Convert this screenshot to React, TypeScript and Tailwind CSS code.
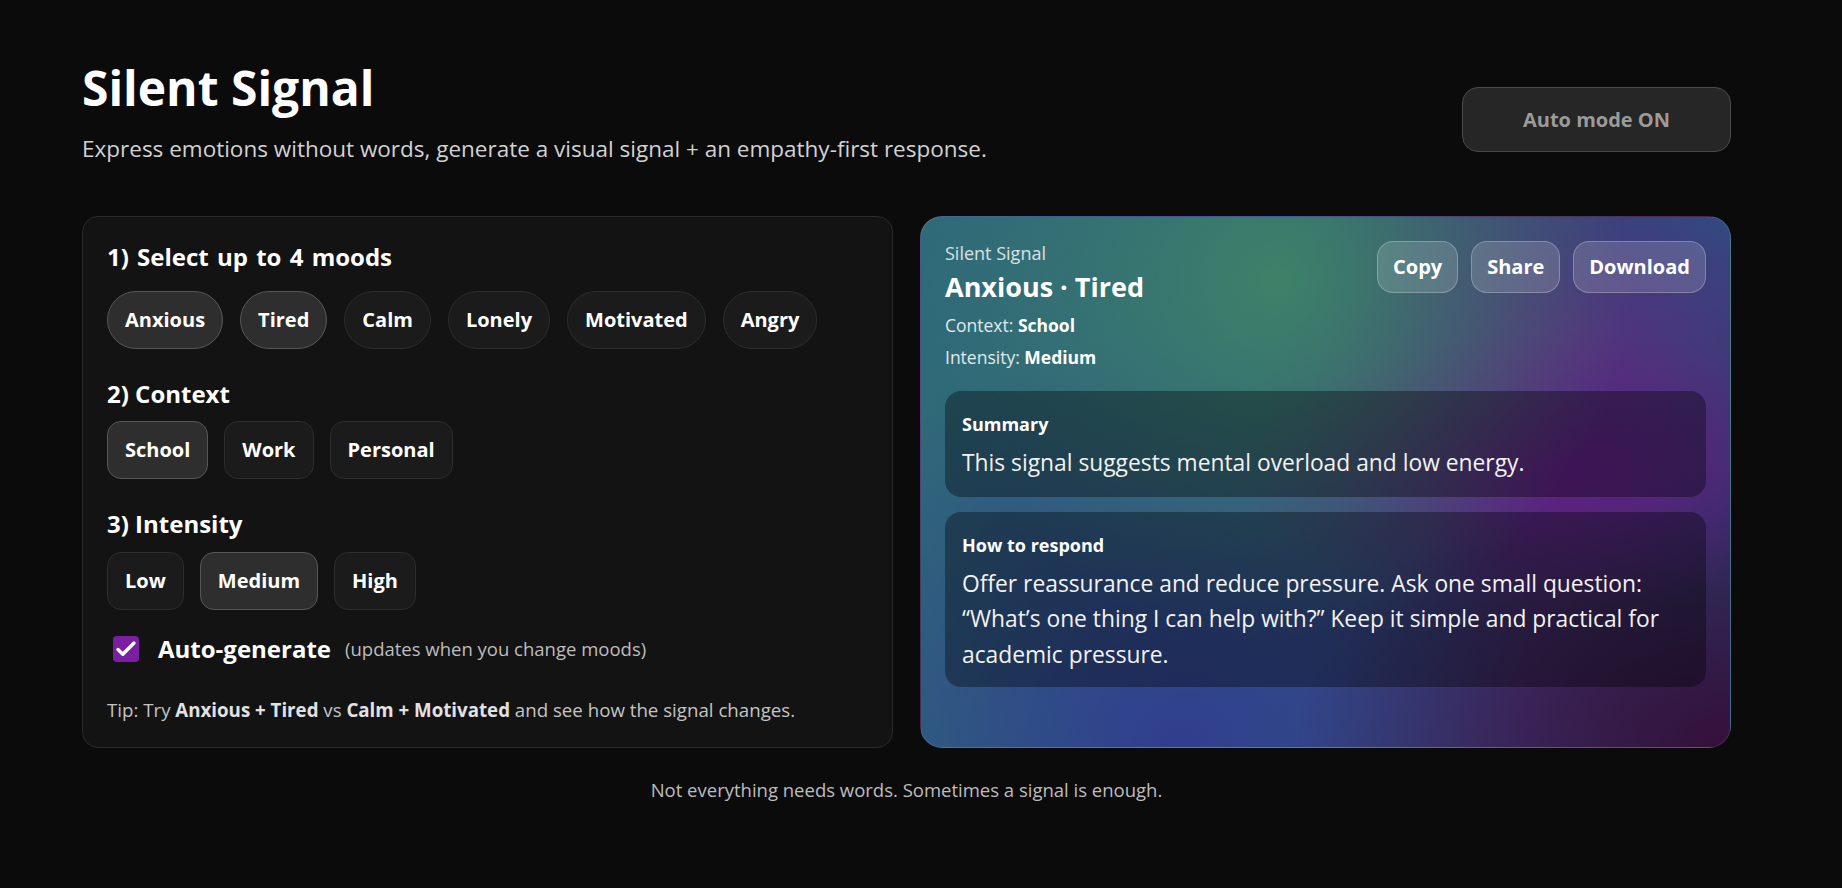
import { useState } from "react";

const MOODS = ["Anxious", "Tired", "Calm", "Lonely", "Motivated", "Angry"];
const CONTEXTS = ["School", "Work", "Personal"];
const INTENSITIES = ["Low", "Medium", "High"];

type ChipProps = { label: string; active: boolean; pill?: boolean; onClick: () => void };

function Chip({ label, active, pill, onClick }: ChipProps) {
  return (
    <button
      onClick={onClick}
      className={`h-[58px] px-[17px] border text-[20px] font-bold text-white ${pill ? "rounded-full" : "rounded-[14px]"} ${
        active ? "bg-[#2e2e2e] border-[#575757]" : "bg-[#1b1b1b] border-[#2d2d2d]"
      }`}
    >
      {label}
    </button>
  );
}

function SectionTitle({ children, className = "" }: { children: React.ReactNode; className?: string }) {
  return <h2 className={`text-[24px] leading-[32px] font-bold text-white ${className}`}>{children}</h2>;
}

export default function App() {
  const [moods, setMoods] = useState<string[]>(["Anxious", "Tired"]);
  const [context, setContext] = useState("School");
  const [intensity, setIntensity] = useState("Medium");
  const [auto, setAuto] = useState(true);

  const toggleMood = (m: string) =>
    setMoods((prev) => (prev.includes(m) ? prev.filter((x) => x !== m) : prev.length >= 4 ? prev : [...prev, m]));

  return (
    <div className="min-h-screen bg-[#0b0b0b] text-white font-['Open_Sans',sans-serif]">
      <div className="ml-[82px] w-[1649px] pt-[58px] pb-10">
        {/* header */}
        <header className="flex items-start justify-between">
          <div>
            <h1 className="text-[48px] leading-[60px] font-bold">Silent Signal</h1>
            <p className="mt-[14px] text-[22.5px] leading-[33px] text-[#d2d2d2]">
              Express emotions without words, generate a visual signal + an empathy-first response.
            </p>
          </div>
          <button className="mt-[29px] w-[269px] h-[65px] rounded-2xl border border-[#4a4a4a] bg-[#262626] text-[20px] font-bold text-[#9b9b9b]">
            Auto mode ON
          </button>
        </header>

        <div className="mt-[51px] grid grid-cols-2 gap-[27px]">
          {/* controls */}
          <section className="rounded-2xl border border-[#2a2a2a] bg-[#131313] px-6 pt-6 pb-6">
            <SectionTitle className="mb-[18px] [word-spacing:2px]">1) Select up to 4 moods</SectionTitle>
            <div className="flex gap-[17px]">
              {MOODS.map((m) => (
                <Chip key={m} label={m} pill active={moods.includes(m)} onClick={() => toggleMood(m)} />
              ))}
            </div>

            <SectionTitle className="mt-[29px] mb-[11px]">2) Context</SectionTitle>
            <div className="flex gap-4">
              {CONTEXTS.map((c) => (
                <Chip key={c} label={c} active={context === c} onClick={() => setContext(c)} />
              ))}
            </div>

            <SectionTitle className="mt-[29px] mb-[12px]">3) Intensity</SectionTitle>
            <div className="flex gap-4">
              {INTENSITIES.map((i) => (
                <Chip key={i} label={i} active={intensity === i} onClick={() => setIntensity(i)} />
              ))}
            </div>

            <label className="mt-[23px] h-[32px] flex items-center cursor-pointer" onClick={() => setAuto(!auto)}>
              <span className={`ml-[6px] w-[26px] h-[26px] rounded-[4px] flex items-center justify-center ${auto ? "bg-[#7b1fa2]" : "border border-[#777]"}`}>
                {auto && (
                  <svg viewBox="0 0 24 24" className="w-[24px] h-[24px]" fill="none" stroke="white" strokeWidth="3.4" strokeLinecap="round" strokeLinejoin="round">
                    <path d="M4 12.5l4.8 4.8L20 6" />
                  </svg>
                )}
              </span>
              <span className="ml-[19px] text-[24px] font-bold text-white">Auto-generate</span>
              <span className="ml-[14px] text-[18.5px] text-[#bdbdbd]">(updates when you change moods)</span>
            </label>

            <p className="mt-[32px] text-[18.7px] leading-[26px] text-[#c4c4c4]">
              Tip: Try <b className="text-[#e2e2e2]">Anxious + Tired</b> vs <b className="text-[#e2e2e2]">Calm + Motivated</b> and see how the signal changes.
            </p>
          </section>

          {/* signal card */}
          <section className="rounded-[22px] border border-white/10 px-6 pt-6 pb-6 bg-[image:radial-gradient(ellipse_at_44%_12%,rgba(60,130,104,1)_0%,rgba(60,130,104,0)_55%),radial-gradient(ellipse_at_78%_48%,rgba(96,30,132,1)_0%,rgba(96,30,132,0)_36%),radial-gradient(ellipse_at_80%_25%,rgba(88,48,126,0.9)_0%,rgba(88,48,126,0)_35%),radial-gradient(ellipse_at_100%_100%,rgba(52,16,58,1)_0%,rgba(52,16,58,0)_38%),radial-gradient(ellipse_at_32%_100%,rgba(48,62,142,1)_0%,rgba(48,62,142,0)_55%),radial-gradient(ellipse_at_100%_0%,rgba(44,78,130,1)_0%,rgba(44,78,130,0)_35%),linear-gradient(90deg,#2f6a78_0%,#2f5e80_40%,#43356f_75%,#2b3766_100%)]">
            <div className="flex items-start justify-between">
              <div>
                <div className="text-[18px] leading-[24px] text-white/80">Silent Signal</div>
                <div className="mt-[6px] text-[27px] leading-[32px] font-bold">{moods.join(" · ")}</div>
                <div className="mt-[6px] text-[17.5px] leading-[32px] text-white/85">
                  Context: <b className="text-white">{context}</b>
                </div>
                <div className="text-[17.5px] leading-[32px] text-white/85">
                  Intensity: <b className="text-white">{intensity}</b>
                </div>
              </div>
              <div className="flex gap-[13px]">
                {["Copy", "Share", "Download"].map((b) => (
                  <button key={b} className="h-[52px] px-[15px] rounded-2xl border border-white/25 bg-white/15 text-[20px] font-bold text-white">
                    {b}
                  </button>
                ))}
              </div>
            </div>

            <div className="mt-[18px] flex flex-col gap-[15px]">
              <div className="rounded-2xl bg-black/35 px-[17px] pt-[21px] pb-[16px]">
                <div className="text-[18px] leading-[24px] font-bold">Summary</div>
                <p className="mt-[9px] text-[22.8px] leading-[35.5px] text-[#f2f2f2]">This signal suggests mental overload and low energy.</p>
              </div>
              <div className="rounded-2xl bg-black/35 px-[17px] pt-[21px] pb-[15px]">
                <div className="text-[18px] leading-[24px] font-bold">How to respond</div>
                <p className="mt-[9px] text-[22.8px] leading-[35.5px] text-[#f2f2f2]">
                  Offer reassurance and reduce pressure. Ask one small question: “What’s one thing I can help with?” Keep it simple and practical for academic pressure.
                </p>
              </div>
            </div>
          </section>
        </div>

        <p className="mt-[28px] text-center text-[18.5px] leading-[28px] text-[#bdbdbd]">
          Not everything needs words. Sometimes a signal is enough.
        </p>
      </div>
    </div>
  );
}
